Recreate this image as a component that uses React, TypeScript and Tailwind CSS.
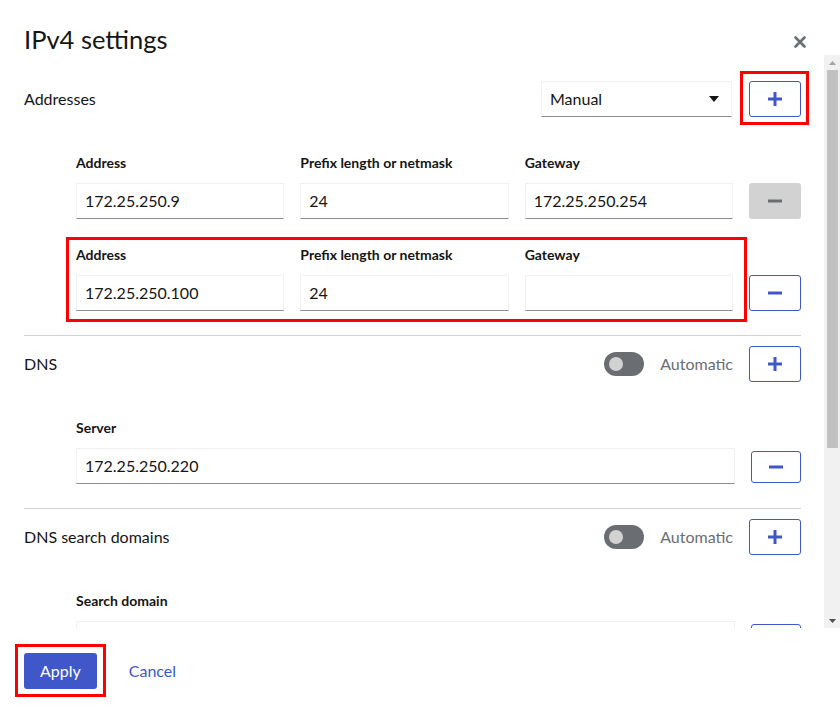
import { ReactNode } from "react"

const PlusIcon = () => (
  <svg width="14" height="14" viewBox="0 0 14 14">
    <rect x="5.5" y="0" width="3" height="14" fill="currentColor" />
    <rect x="0" y="5.5" width="14" height="3" fill="currentColor" />
  </svg>
)

const MinusIcon = () => (
  <svg width="14" height="4" viewBox="0 0 14 4">
    <rect x="0" y="0.5" width="14" height="3" fill="currentColor" />
  </svg>
)

const CloseIcon = () => (
  <svg width="12" height="12" viewBox="0 0 12 12">
    <path d="M1.5 1.5 L10.5 10.5 M10.5 1.5 L1.5 10.5" stroke="currentColor" strokeWidth="2.6" strokeLinecap="round" />
  </svg>
)

const IconButton = ({ children, disabled, small }: { children: ReactNode; disabled?: boolean; small?: boolean }) => (
  <button
    className={
      disabled
        ? "flex h-9 w-[52px] items-center justify-center rounded-[3px] bg-[#d2d2d2] text-[#6a6e73]"
        : small
          ? "flex h-8 w-[50px] items-center justify-center rounded-[3px] border border-[#4057c9] text-[#4057c9]"
          : "flex h-9 w-[52px] items-center justify-center rounded-[3px] border border-[#4057c9] text-[#4057c9]"
    }
  >
    {children}
  </button>
)

const Input = ({ value }: { value: string }) => (
  <div className="flex h-9 items-center border border-[#f0f0f0] border-b-[#8a8d90] bg-white px-2 text-base text-[#151515]">
    {value}
  </div>
)

const Label = ({ children }: { children: ReactNode }) => (
  <div className="h-5 text-sm font-bold leading-5 text-[#151515]">{children}</div>
)

const Toggle = () => (
  <div className="flex h-6 w-10 items-center rounded-full bg-[#6a6e73] pl-[5px]">
    <div className="size-[14px] rounded-full bg-[#d2d2d2]" />
  </div>
)

const Highlight = ({ className }: { className: string }) => (
  <div className={"pointer-events-none absolute border-[3px] border-[#ff0000] " + className} />
)

const AddressRow = ({ address, prefix, gateway, disabled, highlight }: { address: string; prefix: string; gateway: string; disabled?: boolean; highlight?: boolean }) => (
  <div className="grid grid-cols-[1fr_1fr_1fr_52px] gap-x-4 gap-y-[10px]">
    <div className="relative col-span-3 grid grid-cols-3 gap-x-4 gap-y-[10px]">
      {highlight && <Highlight className="-top-[8px] -bottom-[11px] -left-[10px] -right-[14px]" />}
      <Label>Address</Label>
      <Label>Prefix length or netmask</Label>
      <Label>Gateway</Label>
      <Input value={address} />
      <Input value={prefix} />
      <Input value={gateway} />
    </div>
    <div className="self-end">
      <IconButton disabled={disabled}>
        <MinusIcon />
      </IconButton>
    </div>
  </div>
)

const SectionHeader = ({ title, children }: { title: string; children: ReactNode }) => (
  <div className="flex h-9 items-center justify-between">
    <span className="text-base">{title}</span>
    <div className="flex items-center gap-4">{children}</div>
  </div>
)

const AutoHeader = ({ title }: { title: string }) => (
  <SectionHeader title={title}>
    <Toggle />
    <span className="text-base text-[#6a6e73]">Automatic</span>
    <IconButton>
      <PlusIcon />
    </IconButton>
  </SectionHeader>
)

const SingleField = ({ label, value }: { label: string; value: string }) => (
  <div className="ml-[52px] mt-9 flex items-end gap-4">
    <div className="flex flex-1 flex-col gap-[10px]">
      <Label>{label}</Label>
      <Input value={value} />
    </div>
    <div className="pb-[1px]">
      <IconButton small>
        <MinusIcon />
      </IconButton>
    </div>
  </div>
)

const Scrollbar = () => (
  <div className="flex w-[16px] shrink-0 flex-col items-center bg-[#f1f1f1]">
    <div className="flex h-[15px] items-center justify-center">
      <svg width="7" height="4" viewBox="0 0 7 4">
        <path d="M0 4 L3.5 0 L7 4 Z" fill="#a3a3a3" />
      </svg>
    </div>
    <div className="h-[378px] w-[11px] bg-[#c1c1c1]" />
    <div className="flex-1" />
    <div className="flex h-[15px] items-center justify-center">
      <svg width="7" height="4" viewBox="0 0 7 4">
        <path d="M0 0 L7 0 L3.5 4 Z" fill="#505050" />
      </svg>
    </div>
  </div>
)

export default function App() {
  return (
    <div className="flex h-[713px] w-[840px] flex-col bg-white font-['Lato',sans-serif] text-[#151515]">
      <header className="flex h-[55px] items-start justify-between pl-6 pr-[34px] pt-6">
        <h1 className="text-[25.5px] leading-[31px]">IPv4 settings</h1>
        <span className="mt-[12px] text-[#6a6e73]">
          <CloseIcon />
        </span>
      </header>

      <div className="flex min-h-0 flex-1">
        <div className="min-w-0 flex-1 overflow-hidden pl-6 pr-[23px]">
          <div className="pt-[26px]">
            <SectionHeader title="Addresses">
              <div className="flex h-9 w-[191px] items-center justify-between border border-[#f0f0f0] border-b-[#8a8d90] pl-2 pr-3 text-base">
                <span>Manual</span>
                <svg width="10" height="6" viewBox="0 0 10 6">
                  <path d="M0 0 L10 0 L5 6 Z" fill="#151515" />
                </svg>
              </div>
              <div className="relative ml-[1px]">
                <Highlight className="-top-[10px] -bottom-[8px] -left-[9px] -right-[8px]" />
                <IconButton>
                  <PlusIcon />
                </IconButton>
              </div>
            </SectionHeader>

            <div className="ml-[52px] mt-9 flex flex-col gap-[26px]">
              <AddressRow address="172.25.250.9" prefix="24" gateway="172.25.250.254" disabled />
              <AddressRow address="172.25.250.100" prefix="24" gateway="" highlight />
            </div>
          </div>

          <div className="mt-6 border-t border-[#d2d2d2] pt-[10px]">
            <AutoHeader title="DNS" />
            <SingleField label="Server" value="172.25.250.220" />
          </div>

          <div className="mt-6 border-t border-[#d2d2d2] pt-[10px]">
            <AutoHeader title="DNS search domains" />
            <SingleField label="Search domain" value="" />
          </div>
        </div>
        <Scrollbar />
      </div>

      <footer className="flex h-[85px] items-start gap-8 px-6 pt-[25px]">
        <div className="relative">
          <Highlight className="-top-[9px] -bottom-[8px] -left-[9px] -right-[9px]" />
          <button className="h-9 rounded-[3px] bg-[#4057c9] px-4 text-base text-white">Apply</button>
        </div>
        <button className="h-9 text-base text-[#4057c9]">Cancel</button>
      </footer>
    </div>
  )
}
